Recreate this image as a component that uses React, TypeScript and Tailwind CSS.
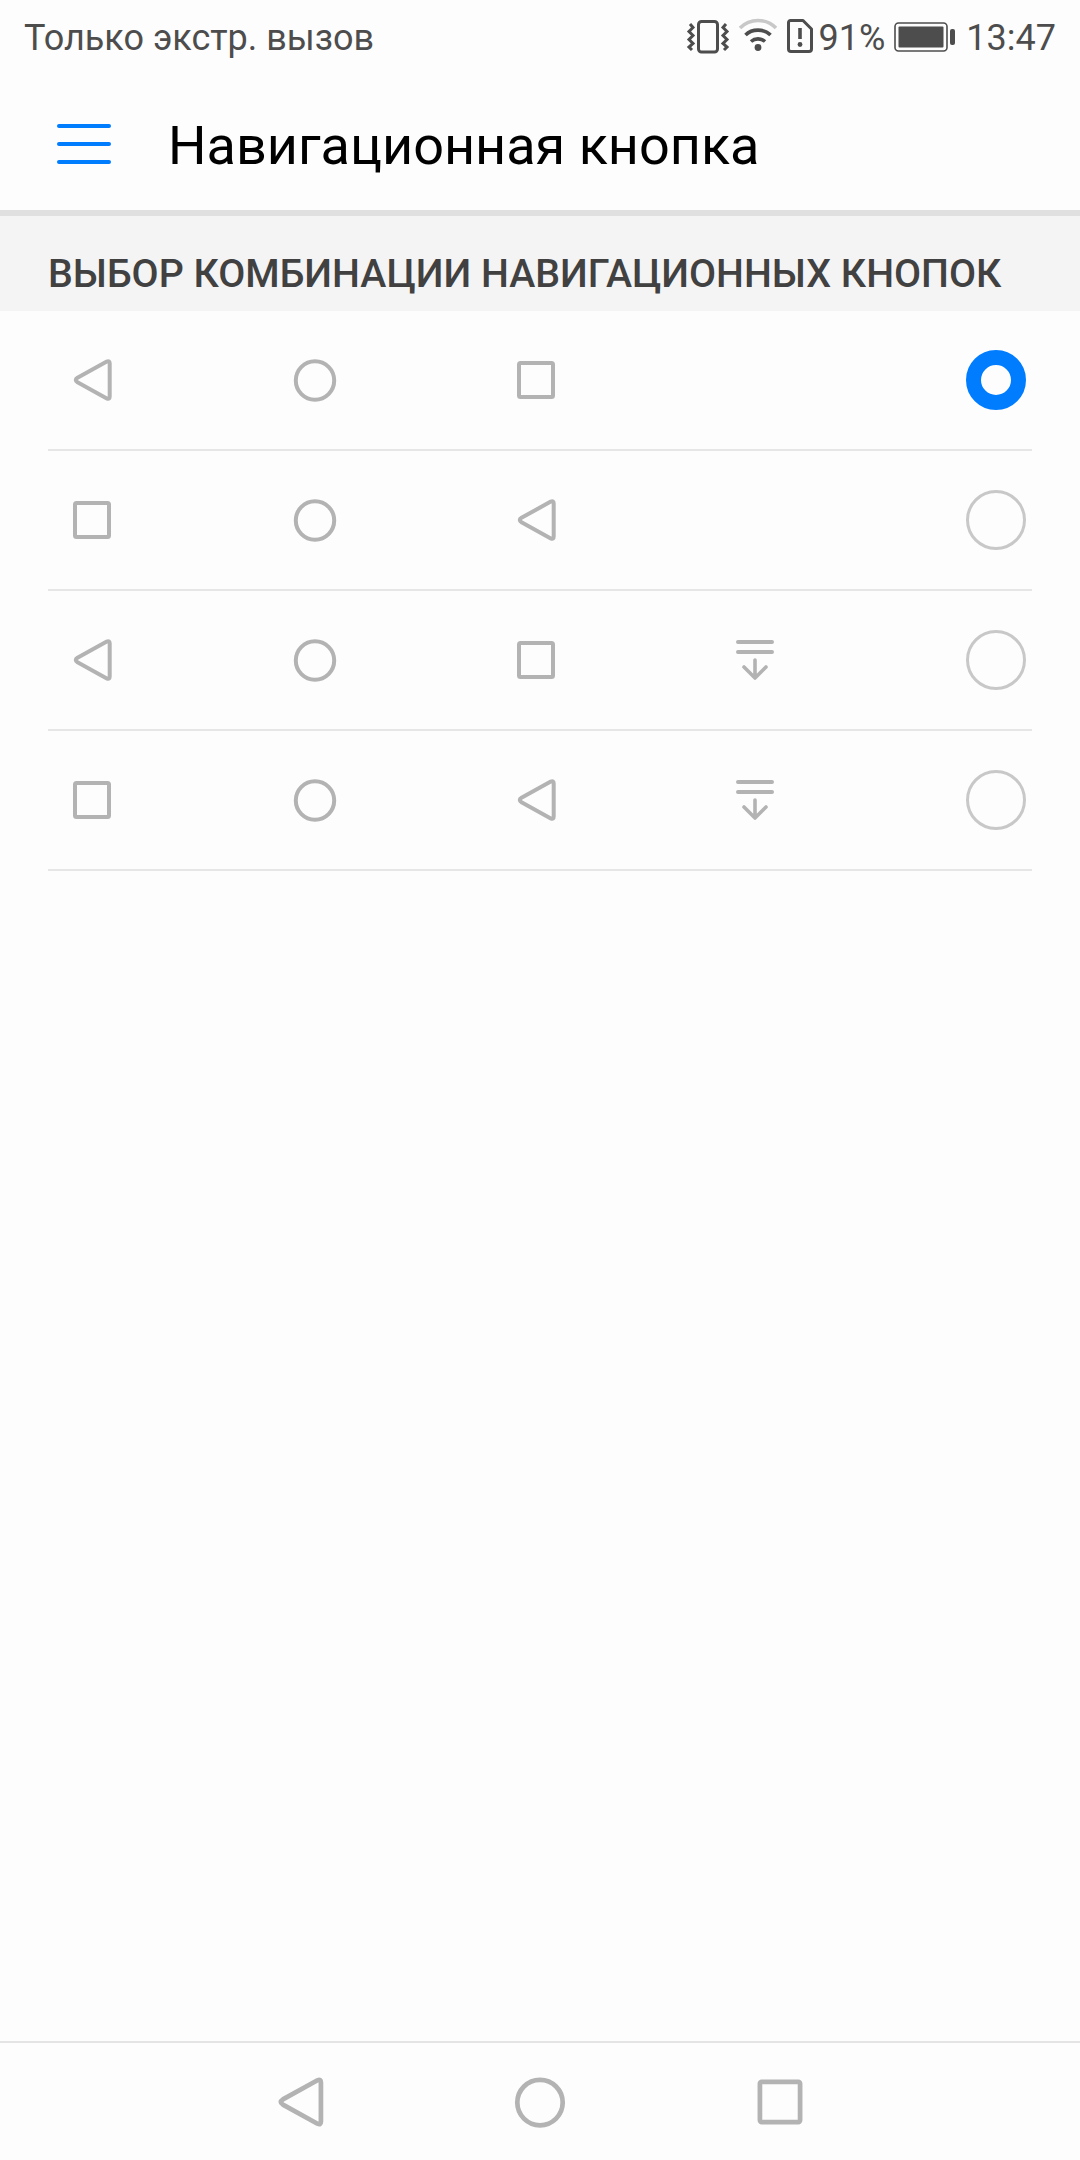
import React from 'react';

const GRAY = '#b3b3b3';

const BackIcon = ({ size = 44 }: { size?: number }) => (
  <svg width={size} height={size} viewBox="0 0 44 44" fill="none" stroke={GRAY} strokeWidth="4" strokeLinejoin="round">
    <path d="M7.5 19.8 L36.8 3.6 Q39.7 2.2 39.7 5.4 V38.6 Q39.7 41.8 36.8 40.4 L7.5 24.2 Q4 22 7.5 19.8 Z" />
  </svg>
);

const HomeIcon = ({ size = 44 }: { size?: number }) => (
  <svg width={size} height={size} viewBox="0 0 44 44" fill="none" stroke={GRAY} strokeWidth="4">
    <circle cx="22" cy="22.5" r="19.2" />
  </svg>
);

const RecentIcon = ({ size = 44 }: { size?: number }) => (
  <svg width={size} height={size} viewBox="0 0 44 44" fill="none" stroke={GRAY} strokeWidth="4" strokeLinejoin="round">
    <rect x="5" y="5" width="34" height="34" rx="1.5" />
  </svg>
);

const PullIcon = () => (
  <svg width="44" height="44" viewBox="0 0 44 44" fill="none" stroke={GRAY} strokeWidth="4" strokeLinecap="round" strokeLinejoin="round">
    <path d="M6 4 H40 M6 14 H40" />
    <path d="M23 22 V39 M12 29 L23 40 L34 29" strokeWidth="3.6" />
  </svg>
);

const StatusIcons = () => (
  <div className="flex items-center">
    {/* vibration */}
    <svg width="44" height="36" viewBox="0 0 44 36" fill="none" stroke="#4d4d4d" className="-mt-[2px]">
      <rect x="12.5" y="2.5" width="19" height="30.5" rx="3" strokeWidth="3" />
      <path d="M4 5 L7 8.5 L3 12.5 L7 16.5 L3 20.5 L7 24.5 L3 28 L6 31 M40 5 L37 8.5 L41 12.5 L37 16.5 L41 20.5 L37 24.5 L41 28 L38 31" strokeWidth="3" />
    </svg>
    {/* wifi */}
    <svg width="40" height="34" viewBox="0 0 40 34" fill="none" className="-mt-[6px] ml-2">
      <path d="M2 10 C12 0 28 0 38 10" stroke="#c8c8c8" strokeWidth="3.6" />
      <path d="M7.5 17 C14 10.5 26 10.5 32.5 17" stroke="#4d4d4d" strokeWidth="3.6" />
      <path d="M13 23.5 C17 20 23 20 27 23.5" stroke="#4d4d4d" strokeWidth="3.6" />
      <circle cx="20" cy="29.5" r="3.4" fill="#4d4d4d" />
    </svg>
    {/* sim alert */}
    <svg width="26" height="34" viewBox="0 0 26 34" fill="none" className="-mt-1 ml-[9px]">
      <path d="M3.5 1.5 H16 L24.5 10 V30 a2.5 2.5 0 0 1 -2.5 2.5 H4 a2.5 2.5 0 0 1 -2.5 -2.5 V3.5 a2 2 0 0 1 2 -2 Z" stroke="#4d4d4d" strokeWidth="3" strokeLinejoin="round" />
      <path d="M13 9 V20" stroke="#4d4d4d" strokeWidth="3.6" />
      <circle cx="13" cy="25.5" r="2.4" fill="#4d4d4d" />
    </svg>
    <span className="ml-[6px]">91%</span>
    {/* battery */}
    <svg width="62" height="30" viewBox="0 0 62 30" fill="none" className="-mt-[2px] ml-[9px]">
      <rect x="1" y="1" width="52" height="28" rx="3.5" stroke="#4d4d4d" strokeWidth="1.6" />
      <rect x="4.5" y="4.5" width="45" height="21" rx="1" fill="#4d4d4d" />
      <rect x="56" y="7" width="5" height="16" rx="2" fill="#4d4d4d" />
    </svg>
    <span className="ml-[10px]">13:47</span>
  </div>
);

type Slot = 'back' | 'home' | 'recent' | 'pull';

const rows: Slot[][] = [
  ['back', 'home', 'recent'],
  ['recent', 'home', 'back'],
  ['back', 'home', 'recent', 'pull'],
  ['recent', 'home', 'back', 'pull'],
];

const SlotIcon = ({ slot }: { slot: Slot }) => {
  if (slot === 'back') return <BackIcon />;
  if (slot === 'home') return <HomeIcon />;
  if (slot === 'recent') return <RecentIcon />;
  return <PullIcon />;
};

const ComboRow = ({ slots, selected }: { slots: Slot[]; selected?: boolean }) => (
  <div className="mx-12 flex h-[140px] items-center justify-between border-b-2 border-[#e6e6e6] pr-1.5">
    <div className="grid grid-cols-[223px_221px_218px_44px] pl-[22px]">
      {slots.map((slot, i) => (
        <div key={i} className="h-11 w-11">
          <SlotIcon slot={slot} />
        </div>
      ))}
    </div>
    {selected ? (
      <div className="h-[60px] w-[60px] rounded-full border-[15px] border-[#007dff] bg-[#fdfdfd]" />
    ) : (
      <div className="h-[60px] w-[60px] rounded-full border-[3px] border-[#c8c8c8]" />
    )}
  </div>
);

export default function App() {
  return (
    <div className="flex h-[2160px] w-[1080px] flex-col bg-[#fdfdfd] font-['Roboto',sans-serif]">
      <div className="flex h-[72px] items-center justify-between pt-1 pr-6 pl-6 text-[36px] text-[#4d4d4d]">
        <span>Только экстр. вызов</span>
        <StatusIcons />
      </div>

      <div className="flex h-[144px] items-center border-b-[6px] border-[#e0e0e0] pt-2">
        <div className="-mt-[2px] ml-[57px] flex w-[54px] flex-col gap-[14px]">
          <div className="h-1 rounded-full bg-[#007dff]" />
          <div className="h-1 rounded-full bg-[#007dff]" />
          <div className="h-1 rounded-full bg-[#007dff]" />
        </div>
        <h1 className="ml-[57px] text-[54px] text-black">Навигационная кнопка</h1>
      </div>

      <div className="flex h-[95px] items-center bg-[#f4f4f4] pt-[22px] pl-12 text-[39.3px] font-medium text-[#414141]">
        ВЫБОР КОМБИНАЦИИ НАВИГАЦИОННЫХ КНОПОК
      </div>

      <div>
        {rows.map((slots, i) => (
          <ComboRow key={i} slots={slots} selected={i === 0} />
        ))}
      </div>

      <div className="flex-1" />

      <div className="flex h-[119px] items-center justify-center gap-[188px] border-t-2 border-[#e4e4e4]">
        <BackIcon size={52} />
        <HomeIcon size={52} />
        <RecentIcon size={52} />
      </div>
    </div>
  );
}
